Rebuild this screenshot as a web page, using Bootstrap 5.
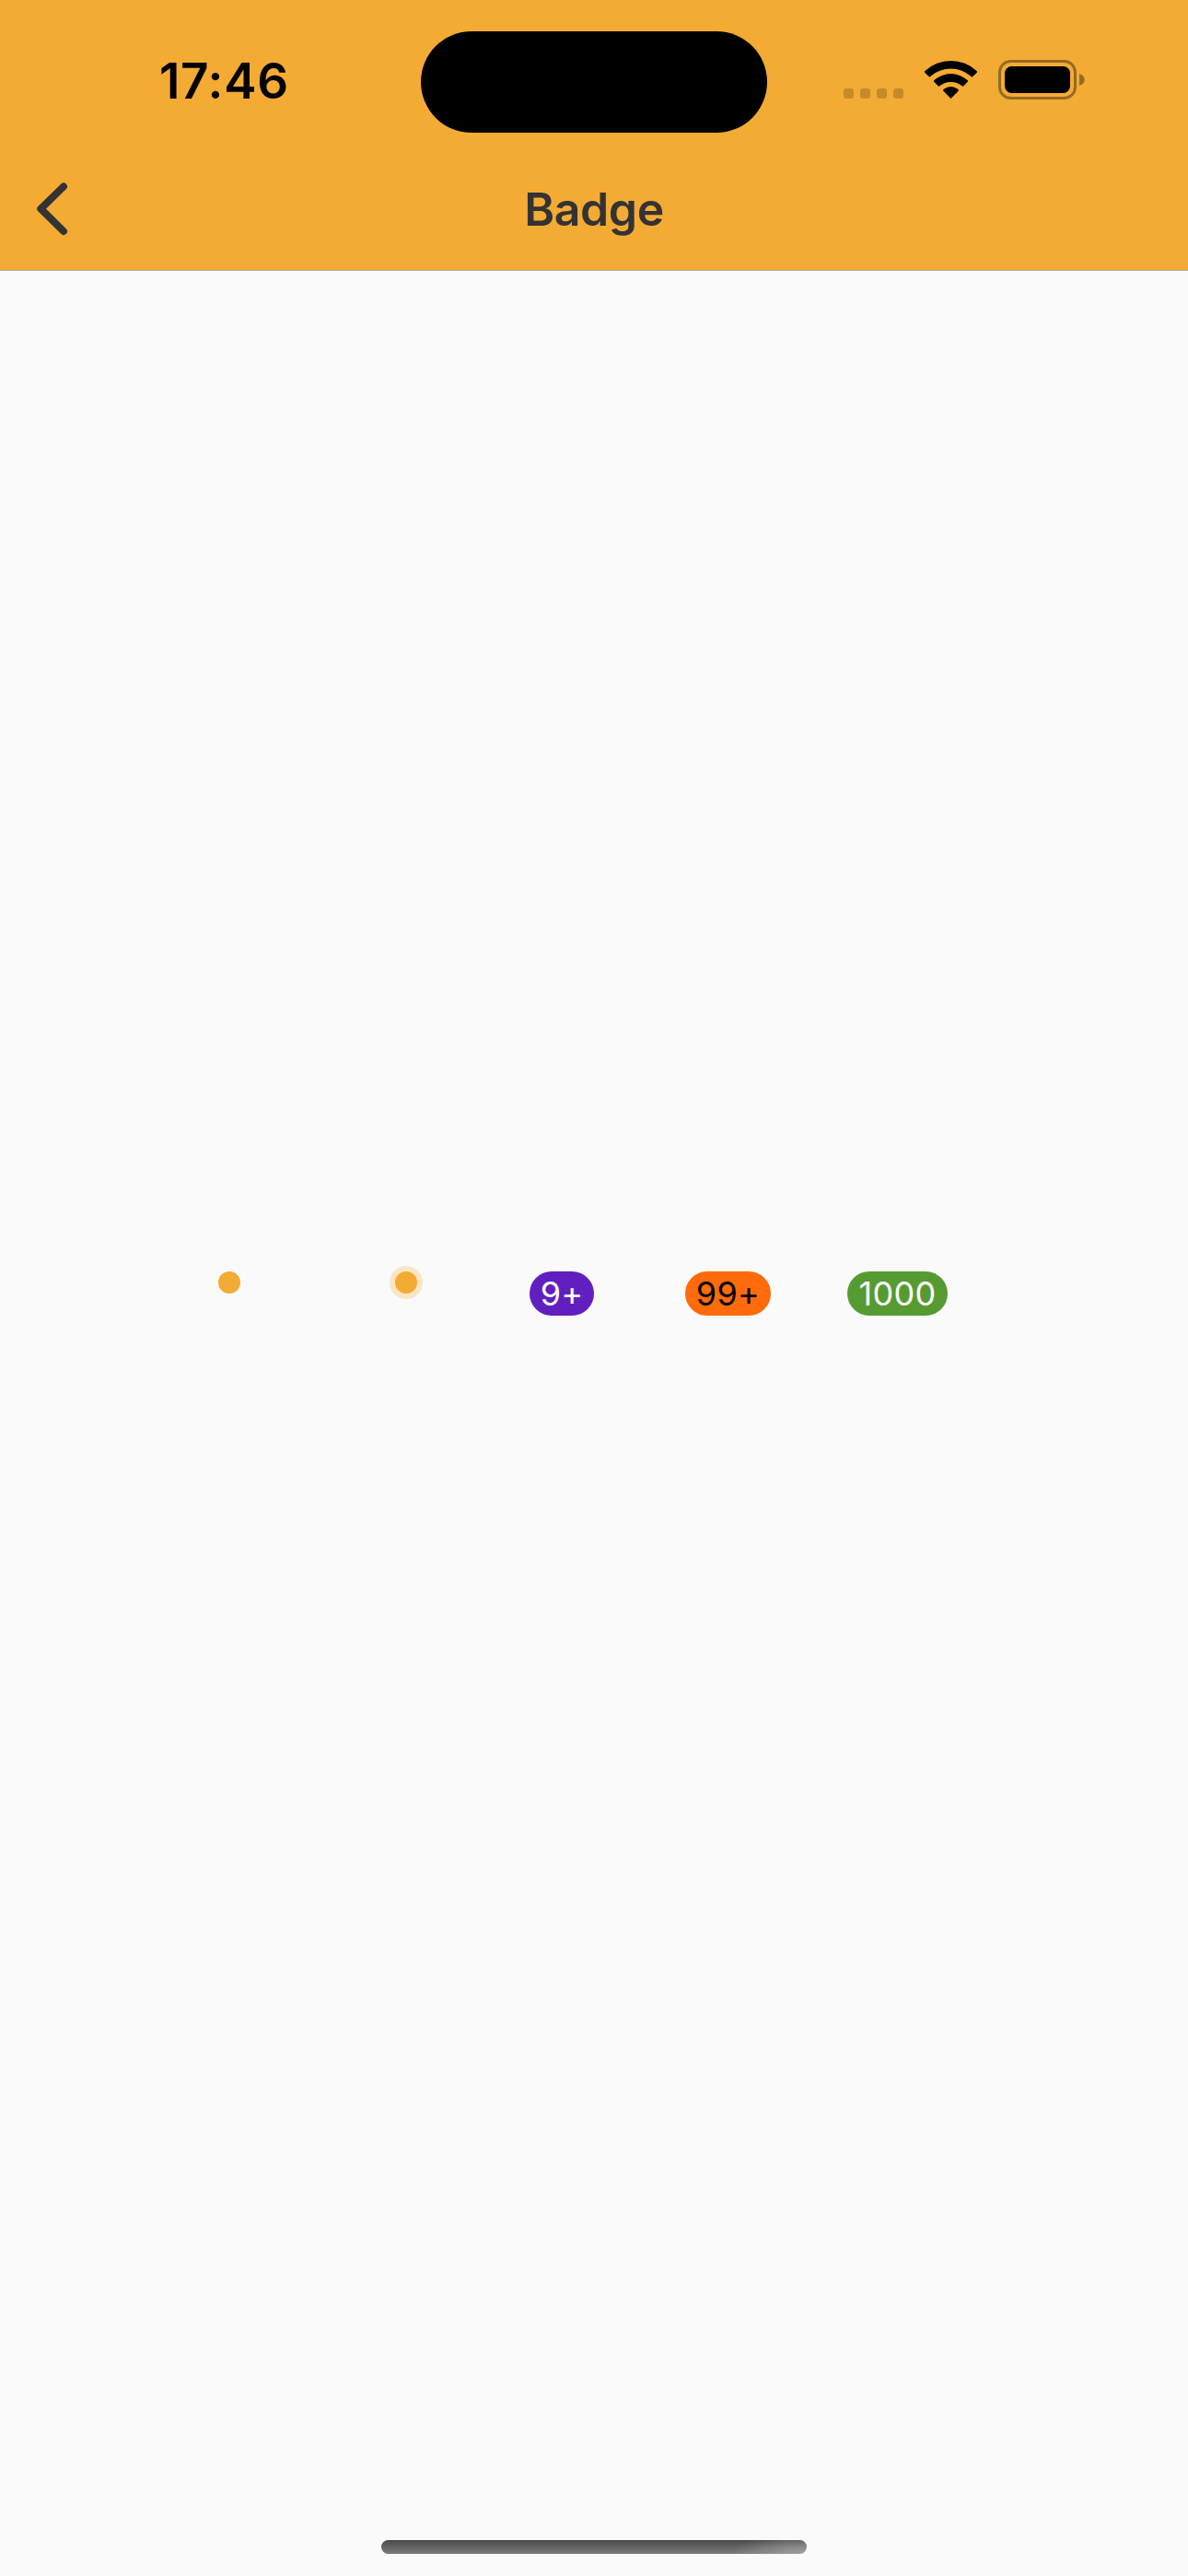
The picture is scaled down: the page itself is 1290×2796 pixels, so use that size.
<!DOCTYPE html>
<html lang="en">
<head>
<meta charset="utf-8">
<meta name="viewport" content="width=device-width, initial-scale=1">
<title>Badge</title>
<link href="https://cdn.jsdelivr.net/npm/bootstrap@5.3.0/dist/css/bootstrap.min.css" rel="stylesheet">
<style>
  body { font-family: Inter, "Liberation Sans", sans-serif; background: #fafafa; height: 2796px; overflow: hidden; }
  .app-header { background: #f4ab33; height: 294px; border-bottom: 1px solid #b3aca2; }
  .status-bar { height: 177px; display: grid; grid-template-columns: 457px 376px 457px; }
  .clock { font-size: 53px; font-weight: 600; line-height: 60px; color: #000; padding: 58px 0 0 173px; letter-spacing: .7px; }
  .island { height: 110.6px; margin-top: 33.7px; background: #000; border-radius: 56px; }
  .indicators { padding: 64px 0 0 83px; }
  .title-bar { height: 116px; display: grid; grid-template-columns: 120px 1fr 120px; }
  .back-link { padding: 18px 0 0 36px; }
  .page-title { font-size: 50px; font-weight: 600; line-height: 60px; color: #333; padding-top: 20px; letter-spacing: -.4px; text-align: center; }
  .badge-row { padding: 1086px 0 0 237px; }
  .dot { width: 24px; height: 24px; background: #f4ab33; }
  .dot-ring { box-shadow: 0 0 0 6px #f9e6c7; margin-left: 168px; }
  .count { height: 48px; padding: 0; border-radius: 24px; font-size: 36px; font-weight: 400; line-height: 49px; letter-spacing: .3px; }
  .count-purple { background: #601fbe; color: #fff; width: 70px; margin-left: 122px; }
  .count-orange { background: #ff6b0b; color: #000; width: 93px; margin-left: 99px; }
  .count-green { background: #569b32; color: #fff; width: 109px; margin-left: 83px; }
  .home-bar { width: 462px; height: 15px; border-radius: 8px; margin-bottom: 24px;
    background: radial-gradient(80px 22px at 100% 100%, rgba(170,170,170,.8), rgba(170,170,170,0)), linear-gradient(#4b4b4b, #7c7c7c); }
</style>
</head>
<body class="d-flex flex-column">
  <header class="app-header flex-shrink-0">
    <div class="status-bar">
      <div class="clock">17:46</div>
      <div class="island"></div>
      <div class="indicators">
        <svg class="d-block" width="264" height="46" viewBox="0 0 264 46" aria-hidden="true">
          <g fill="#c58b2b">
            <rect x="0" y="32" width="11" height="11" rx="3.2"/>
            <rect x="18" y="32" width="11" height="11" rx="3.2"/>
            <rect x="36" y="32" width="11" height="11" rx="3.2"/>
            <rect x="54" y="32" width="11" height="11" rx="3.2"/>
          </g>
          <g transform="translate(-24 0)">
          <path d="M140.5 43 L132.6 35.1 Q131.4 33.8 132.8 32.8 Q140.5 27.1 148.2 32.8 Q149.6 33.8 148.4 35.1Z"/>
          <path d="M122.4 25 Q121.4 24 122.5 23 A27 27 0 0 1 158.5 23 Q159.6 24 158.6 25 L154.1 29.4 Q153.4 30 152.6 29.3 A19 19 0 0 0 128.4 29.3 Q127.6 30 126.9 29.4Z"/>
          <path d="M112.4 15 Q111.5 14 112.5 13 A41 41 0 0 1 168.5 13 Q169.5 14 168.6 15 L164.1 19.2 Q163.4 19.8 162.6 19.1 A32.5 32.5 0 0 0 118.4 19.1 Q117.6 19.8 116.9 19.2Z"/>
          </g>
          <rect x="169.5" y="2.5" width="82" height="40" rx="12" fill="none" stroke="#946b24" stroke-width="3"/>
          <rect x="175" y="8" width="71" height="29" rx="7.5"/>
          <path d="M256 16 Q261.7 18 261.7 22.5 Q261.7 27 256 29Z" fill="#946b24"/>
        </svg>
      </div>
    </div>
    <nav class="title-bar">
      <a class="back-link" href="#" aria-label="Back">
        <svg class="d-block" width="40" height="64" viewBox="0 0 40 64"><path d="M33 7.5 L8.3 31.7 L33 56" fill="none" stroke="#333" stroke-width="8" stroke-linecap="round" stroke-linejoin="round"/></svg>
      </a>
      <h1 class="page-title m-0">Badge</h1>
    </nav>
  </header>
  <main class="badge-row d-flex align-items-start flex-grow-1">
    <span class="dot rounded-circle"></span>
    <span class="dot dot-ring rounded-circle"></span>
    <span class="badge count count-purple">9+</span>
    <span class="badge count count-orange">99+</span>
    <span class="badge count count-green">1000</span>
  </main>
  <div class="home-bar flex-shrink-0 mx-auto"></div>
<script src="https://cdn.jsdelivr.net/npm/bootstrap@5.3.0/dist/js/bootstrap.bundle.min.js"></script>
</body>
</html>
